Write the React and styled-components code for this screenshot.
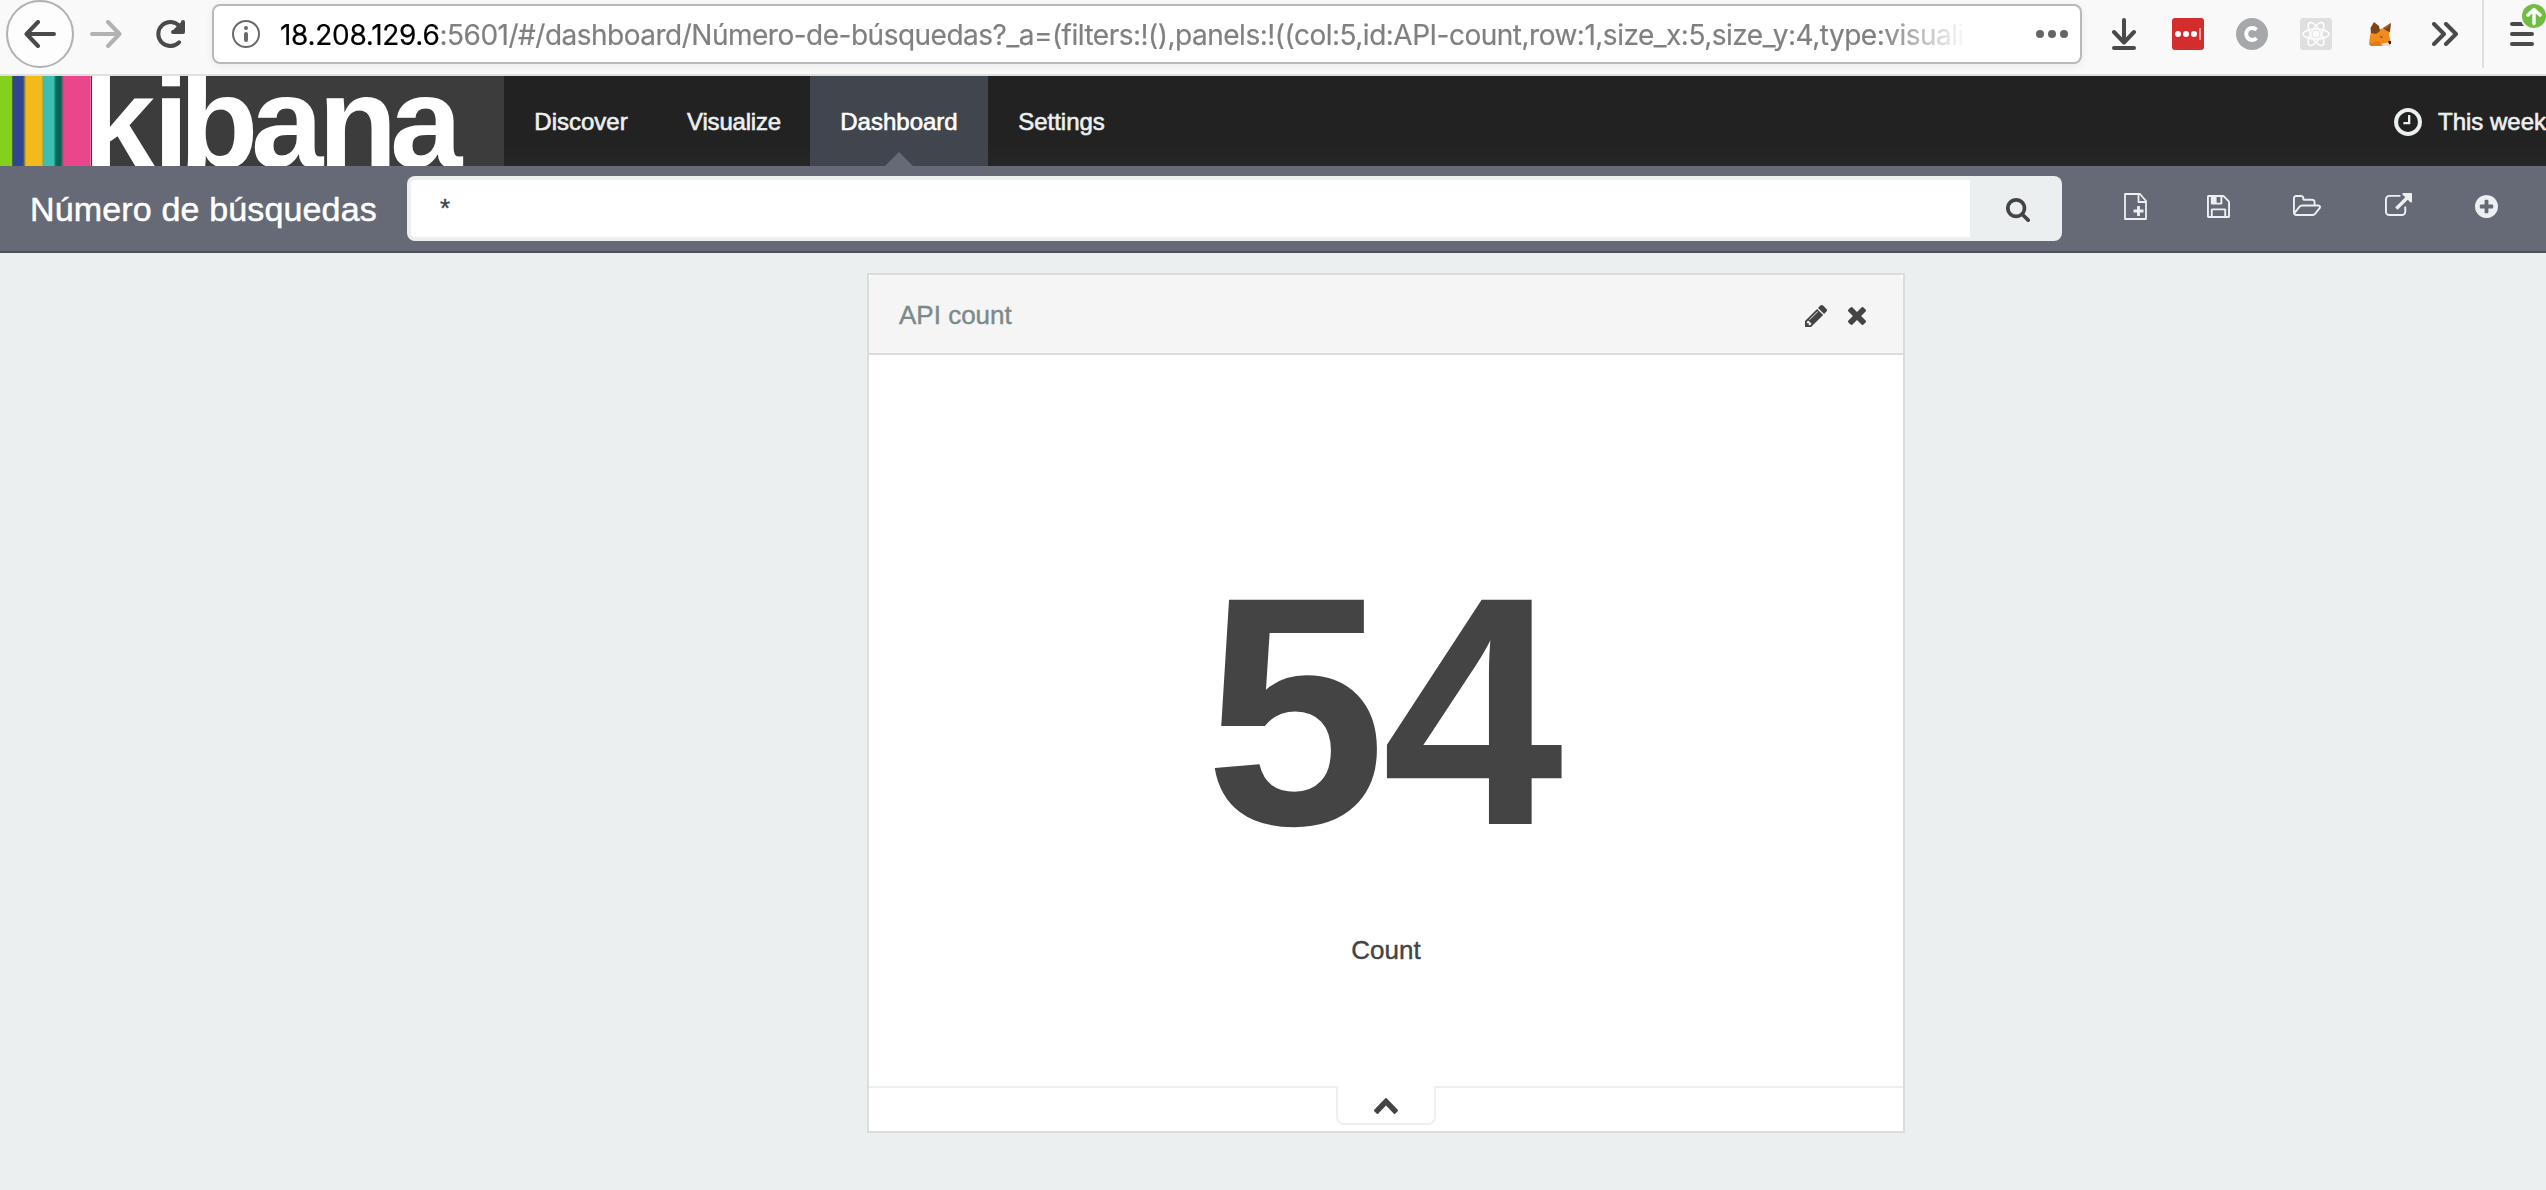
import React from 'react';
import styled, { createGlobalStyle } from 'styled-components';

const GlobalStyle = createGlobalStyle`
  * { box-sizing: border-box; }
  html, body { margin: 0; padding: 0; }
  body {
    background: #ebeff0;
    font-family: "Liberation Sans", Arial, Helvetica, sans-serif;
    color: #444;
    overflow: hidden;
  }
  svg { display: block; flex: none; }
`;

const Page = styled.div`
  width: 2546px;
  height: 1190px;
  overflow: hidden;
  background: #ebeff0;
`;

/* Browser chrome */
const BrowserBar = styled.header`
  display: flex;
  align-items: flex-start;
  height: 76px;
  background: #f9f9f9;
  border-bottom: 2px solid #dfe1e0;
`;

const BrowserButton = styled.div`
  display: flex;
  flex: none;
  align-items: center;
  justify-content: center;
  width: ${(p) => p.$width}px;
  height: 68px;
  margin-left: ${(p) => p.$gap || 0}px;
`;

const BackButton = styled(BrowserButton)`
  border: 2px solid #b1b1b1;
  border-radius: 50%;
  background: #fdfdfd;
`;

const AddressField = styled.div`
  display: flex;
  flex: none;
  align-items: center;
  width: 1870px;
  height: 60px;
  margin: 4px 0 0 25px;
  padding: 0 12px 0 18px;
  border: 2px solid #b9b9b9;
  border-radius: 8px;
  background: #fff;
  box-shadow: 0 2px 8px rgba(0, 0, 0, 0.06);
`;

const AddressText = styled.div`
  width: 1690px;
  margin-left: 20px;
  padding-top: 1px;
  overflow: hidden;
  white-space: nowrap;
  font: 400 28px/40px Inter, "Open Sans", sans-serif;
  letter-spacing: -0.5px;
  color: #808080;
  -webkit-text-stroke: 0.2px currentColor;
  mask-image: linear-gradient(to right, #000 1600px, transparent 1688px);
`;

const AddressHost = styled.span`
  color: #000;
  letter-spacing: -0.3px;
`;

const PageActions = styled.div`
  margin-left: auto;
`;

const MenuDivider = styled.div`
  flex: none;
  width: 2px;
  height: 68px;
  margin-left: 24px;
  background: #dfdfdf;
`;

/* Kibana navigation */
const NavBar = styled.nav`
  display: flex;
  height: 90px;
  background: linear-gradient(#222 75%, #262626);
`;

const Brand = styled.div`
  display: flex;
  width: 504px;
  height: 90px;
  overflow: hidden;
  background: #3c3c3c;
`;

const Stripes = styled.div`
  flex: none;
  width: 91px;
  background: linear-gradient(
    to right,
    #85cf1d 11.5px, #47684a 12px, #47684a 12.6px,
    #2f478f 13.5px, #2f478f 23px, #6c6a52 24px,
    #f2bb1a 26px, #f2bb1a 41.5px, #8ba55d 43px,
    #3cbeb1 44.5px, #3cbeb1 53.5px, #0a6a5c 56px,
    #00634f 60.5px, #6a5868 62px,
    #ea468b 64px, #ea468b 90px, #f3a5c5 91px
  );
`;

const Wordmark = styled.div`
  display: flex;
  flex: none;
  height: 150px;
  margin: -29px 0 0 -8px;
  font: 700 130px/150px "Liberation Sans", Arial, sans-serif;
  color: #fff;
`;

const Glyph = styled.span`
  flex: none;
  width: ${(p) => p.$advance}px;
  white-space: nowrap;
`;

const NavTab = styled.div`
  position: relative;
  display: flex;
  justify-content: center;
  width: ${(p) => p.$width}px;
  height: 90px;
  background: ${(p) => (p.$active ? '#41454d' : 'transparent')};
  color: ${(p) => (p.$active ? '#fff' : '#ecf0f1')};
  font-size: 24px;
  line-height: 92px;
  letter-spacing: ${(p) => p.$tracking || 0}px;
  -webkit-text-stroke: 0.6px currentColor;
`;

const TabArrow = styled.i`
  position: absolute;
  left: 50%;
  bottom: 0;
  margin-left: -14px;
  border: 14px solid transparent;
  border-top: 0;
  border-bottom-color: #656a76;
`;

const TimePicker = styled.div`
  display: flex;
  align-items: center;
  width: 152px;
  margin-left: auto;
  gap: 16px;
  white-space: nowrap;
  color: #ecf0f1;
  font-size: 24px;
  line-height: 92px;
  padding-top: 1px;
  -webkit-text-stroke: 0.6px currentColor;
`;

/* Dashboard toolbar */
const Toolbar = styled.div`
  display: flex;
  align-items: flex-start;
  height: 87px;
  padding: 10px 0 0 30px;
  background: #656a76;
  border-bottom: 2px solid #4c505b;
`;

const DashboardTitle = styled.h1`
  width: 377px;
  margin: 0;
  color: #fff;
  font-size: 34px;
  font-weight: 400;
  line-height: 67px;
  letter-spacing: 0.15px;
  white-space: nowrap;
  -webkit-text-stroke: 0.5px #fff;
`;

const SearchBox = styled.div`
  display: flex;
  width: 1655px;
  height: 65px;
  padding: 4px 0 4px 4px;
  border-radius: 8px;
  background: #ebeff0;
`;

const SearchInput = styled.div`
  width: 1559px;
  padding-left: 29px;
  border-radius: 4px 0 0 4px;
  background: #fff;
  color: #444;
  font-size: 26px;
  line-height: 57px;
  -webkit-text-stroke: 0.4px #444;
`;

const SearchButton = styled.div`
  display: flex;
  flex: 1;
  align-items: center;
  justify-content: center;
  padding: 2px 0 0 4px;
`;

const ToolIcon = styled.div`
  display: flex;
  justify-content: center;
  width: 40px;
  margin: ${(p) => p.$top}px 0 0 ${(p) => p.$gap}px;
  color: #ecf0f1;
`;

/* Dashboard panel */
const Canvas = styled.main`
  display: flex;
  padding: 20px 0 0 867px;
`;

const Panel = styled.section`
  display: flex;
  flex-direction: column;
  width: 1038px;
  height: 860px;
  border: 2px solid #dcdcdc;
  background: #fff;
`;

const PanelHeader = styled.div`
  display: flex;
  align-items: center;
  height: 80px;
  padding: 0 37px 0 30px;
  border-bottom: 2px solid #dcdcdc;
  border-radius: 6px 6px 0 0;
  background: #f5f5f5;
`;

const PanelTitle = styled.span`
  flex: 1;
  padding-top: 1px;
  color: #7b8a8b;
  font-size: 26px;
  line-height: 78px;
  -webkit-text-stroke: 0.4px #7b8a8b;
`;

const PanelActions = styled.div`
  display: flex;
  align-items: center;
  gap: 21px;
  padding-top: 3px;
`;

const MetricBody = styled.div`
  display: flex;
  flex-direction: column;
  align-items: center;
  height: 733px;
  border-bottom: 2px solid #ecf0f1;
`;

const MetricValue = styled.div`
  margin: 166px 8px 0 0;
  font-size: 326px;
  font-weight: 700;
  line-height: 380px;
  letter-spacing: -4px;
  color: #444;
`;

const MetricLabel = styled.div`
  margin-top: 29px;
  font-size: 26px;
  line-height: 40px;
  -webkit-text-stroke: 0.4px #444;
`;

const SpyTab = styled.div`
  display: flex;
  align-items: center;
  justify-content: center;
  align-self: center;
  width: 100px;
  height: 39px;
  margin-top: -2px;
  padding-top: 2px;
  border: 2px solid #ecf0f1;
  border-top: 0;
  border-radius: 0 0 8px 8px;
  background: #fff;
`;

const ICONS = {
  clock: 'M1024 544v448q0 14-9 23t-23 9h-320q-14 0-23-9t-9-23v-64q0-14 9-23t23-9h224v-352q0-14 9-23t23-9h64q14 0 23 9t9 23zm416 352q0-148-73-273t-198-198-273-73-273 73-198 198-73 273 73 273 198 198 273 73 273-73 198-198 73-273zm224 0q0 209-103 385.5t-279.5 279.5-385.5 103-385.5-103-279.5-279.5-103-385.5 103-385.5 279.5-279.5 385.5-103 385.5 103 279.5 279.5 103 385.5z',
  search: 'M1216 832q0-185-131.5-316.5t-316.5-131.5-316.5 131.5-131.5 316.5 131.5 316.5 316.5 131.5 316.5-131.5 131.5-316.5zm512 832q0 52-38 90t-90 38q-54 0-90-38l-343-342q-179 124-399 124-143 0-273.5-55.5t-225-150-150-225-55.5-273.5 55.5-273.5 150-225 225-150 273.5-55.5 273.5 55.5 225 150 150 225 55.5 273.5q0 220-124 399l343 343q37 37 37 90z',
  save: 'M512 1536h768v-384h-768v384zm896 0h128v-896q0-14-10-38.5t-20-34.5l-281-281q-10-10-34-20t-39-10v416q0 40-28 68t-68 28h-576q-40 0-68-28t-28-68v-416h-128v1280h128v-416q0-40 28-68t68-28h832q40 0 68 28t28 68v416zm-384-928v-320q0-13-9.5-22.5t-22.5-9.5h-192q-13 0-22.5 9.5t-9.5 22.5v320q0 13 9.5 22.5t22.5 9.5h192q13 0 22.5-9.5t9.5-22.5zm640 32v928q0 40-28 68t-68 28h-1344q-40 0-68-28t-28-68v-1344q0-40 28-68t68-28h928q40 0 88 20t76 48l280 280q28 28 48 76t20 88z',
  open: 'M1845 931q0-35-53-35h-1088q-40 0-85.5 21.5t-71.5 52.5l-294 363q-18 24-18 40 0 35 53 35h1088q40 0 86-22t71-53l294-363q18-22 18-39zm-1141-163h768v-160q0-40-28-68t-68-28h-576q-40 0-68-28t-28-68v-64q0-40-28-68t-68-28h-320q-40 0-68 28t-28 68v853l256-315q44-53 116-87.5t140-34.5zm1269 163q0 62-46 120l-295 363q-43 53-116 87.5t-140 34.5h-1088q-92 0-158-66t-66-158v-960q0-92 66-158t158-66h320q92 0 158 66t66 158v32h544q92 0 158 66t66 158v160h192q54 0 99 24.5t67 70.5q15 32 15 68z',
  share: 'M1408 928v320q0 119-84.5 203.5t-203.5 84.5h-832q-119 0-203.5-84.5t-84.5-203.5v-832q0-119 84.5-203.5t203.5-84.5h704q14 0 23 9t9 23v64q0 14-9 23t-23 9h-704q-66 0-113 47t-47 113v832q0 66 47 113t113 47h832q66 0 113-47t47-113v-320q0-14 9-23t23-9h64q14 0 23 9t9 23zm384-864v512q0 26-19 45t-45 19-45-19l-176-176-652 652q-10 10-23 10t-23-10l-114-114q-10-10-10-23t10-23l652-652-176-176q-19-19-19-45t19-45 45-19h512q26 0 45 19t19 45z',
  add: 'M1344 960v-128q0-26-19-45t-45-19h-256v-256q0-26-19-45t-45-19h-128q-26 0-45 19t-19 45v256h-256q-26 0-45 19t-19 45v128q0 26 19 45t45 19h256v256q0 26 19 45t45 19h128q26 0 45-19t19-45v-256h256q26 0 45-19t19-45zm320-64q0 209-103 385.5t-279.5 279.5-385.5 103-385.5-103-279.5-279.5-103-385.5 103-385.5 279.5-279.5 385.5-103 385.5 103 279.5 279.5 103 385.5z',
  pencil: 'M491 1536l91-91-235-235-91 91v107h128v128h107zm523-928q0-22-22-22-10 0-17 7l-542 542q-7 7-7 17 0 22 22 22 10 0 17-7l542-542q7-7 7-17zm-54-192l416 416-832 832h-416v-416zm683 96q0 53-37 90l-166 166-416-416 166-165q36-38 90-38 53 0 91 38l235 234q37 39 37 91z',
  close: 'M1490 1322q0 40-28 68l-136 136q-28 28-68 28t-68-28l-294-294-294 294q-28 28-68 28t-68-28l-136-136q-28-28-28-68t28-68l294-294-294-294q-28-28-28-68t28-68l136-136q28-28 68-28t68 28l294 294 294-294q28-28 68-28t68 28l136 136q28 28 28 68t-28 68l-294 294 294 294q28 28 28 68z',
  up: 'M1683 1331l-166 165q-19 19-45 19t-45-19l-531-531-531 531q-19 19-45 19t-45-19l-166-165q-19-19-19-45.5t19-45.5l742-741q19-19 45-19t45 19l742 741q19 19 19 45.5t-19 45.5z',
};

/* box is the drawn area of the glyph in font units: x, y, width, height */
function Icon({ name, width, height, box, color = 'currentColor' }) {
  return (
    <svg width={width} height={height} viewBox={box} preserveAspectRatio="none" fill={color}>
      <path d={ICONS[name]} />
    </svg>
  );
}

function StrokeIcon({ width, height, color = '#4a4a4a', weight = 4, children }) {
  return (
    <svg
      width={width}
      height={height}
      viewBox={`0 0 ${width} ${height}`}
      fill="none"
      stroke={color}
      strokeWidth={weight}
      strokeLinecap="round"
      strokeLinejoin="round"
    >
      {children}
    </svg>
  );
}

function Chrome() {
  return (
    <BrowserBar>
      <BackButton $width={68} $gap={6}>
        <StrokeIcon width={32} height={28}>
          <path d="M30 14H2.5M14 2L2.5 14L14 26" />
        </StrokeIcon>
      </BackButton>
      <BrowserButton $width={32} $gap={16}>
        <StrokeIcon width={32} height={28} color="#b2b2b2">
          <path d="M2 14H29.5M18 2L29.5 14L18 26" />
        </StrokeIcon>
      </BrowserButton>
      <BrowserButton $width={32} $gap={33}>
        <StrokeIcon width={32} height={28}>
          <path d="M24 22.3A12 12 0 1 1 24.5 6.3" />
          <path d="M28.5 2V12.3H18.5Z" fill="#4a4a4a" stroke="none" />
          <path d="M28 2V12H18" />
          <path d="M27 4L20 11" />
        </StrokeIcon>
      </BrowserButton>
      <AddressField>
        <StrokeIcon width={28} height={28} color="#6a6a6a" weight={2}>
          <circle cx="14" cy="14" r="13" />
          <circle cx="14" cy="8" r="2" fill="#6a6a6a" stroke="none" />
          <path d="M14 14V20" strokeWidth="4" />
        </StrokeIcon>
        <AddressText>
          <AddressHost>18.208.129.6</AddressHost>
          :5601/#/dashboard/Número-de-búsquedas?_a=(filters:!(),panels:!((col:5,id:API-count,row:1,size_x:5,size_y:4,type:visuali
        </AddressText>
        <PageActions>
          <svg width="32" height="8" fill="#666">
            <circle cx="4" cy="4" r="4" />
            <circle cx="16" cy="4" r="4" />
            <circle cx="28" cy="4" r="4" />
          </svg>
        </PageActions>
      </AddressField>
      <BrowserButton $width={24} $gap={30}>
        <StrokeIcon width={24} height={32}>
          <path d="M12 2V24M2 14L12 24.5L22 14M2 30H22" />
        </StrokeIcon>
      </BrowserButton>
      <BrowserButton $width={32} $gap={36}>
        <svg width="32" height="32">
          <rect width="32" height="32" rx="3" fill="#d32d2d" />
          <g fill="#fff">
            <circle cx="6" cy="16" r="3" />
            <circle cx="14" cy="16" r="3" />
            <circle cx="22" cy="16" r="3" />
          </g>
          <rect x="27" y="10" width="2" height="12" fill="#eba0a0" />
        </svg>
      </BrowserButton>
      <BrowserButton $width={32} $gap={32}>
        <svg width="32" height="32" fill="none">
          <circle cx="16" cy="16" r="16" fill="#a7a8ac" />
          <path d="M20.5 11.8A6 6 0 1 0 20.5 20.2" stroke="#fff" strokeWidth="4" />
        </svg>
      </BrowserButton>
      <BrowserButton $width={32} $gap={32}>
        <svg width="32" height="32" fill="none" stroke="#fff" strokeWidth="1.5">
          <rect width="32" height="32" rx="3" fill="#dfdfdf" stroke="none" />
          <ellipse cx="16" cy="16" rx="13" ry="5" />
          <ellipse cx="16" cy="16" rx="13" ry="5" transform="rotate(60 16 16)" />
          <ellipse cx="16" cy="16" rx="13" ry="5" transform="rotate(120 16 16)" />
          <circle cx="16" cy="16" r="2.6" fill="#fff" />
        </svg>
      </BrowserButton>
      <BrowserButton $width={22} $gap={37}>
        <svg width="22" height="24">
          <path d="M2 9L8 8L15 6L21 8L20 13L22 21L20 24H2L0 22L1 14Z" fill="#f28a1e" />
          <path d="M5 0L10 4L11 9L7 12L2 11L1.5 6Z" fill="#7a4519" />
          <path d="M22 1L21 10L18 9L14 6Z" fill="#7a4519" />
          <path d="M22 1L14 6L18 6Z" fill="#b5651d" />
          <path d="M0 22L9 19L13 23L10 24H2Z" fill="#e27a17" />
          <path d="M12 22L21 20L20 24H14Z" fill="#e8dcd0" />
          <path d="M19 19H22V22H20Z" fill="#2d2018" />
          <path d="M11 14L14 15L12 16Z" fill="#6b3a12" />
        </svg>
      </BrowserButton>
      <BrowserButton $width={26} $gap={41}>
        <StrokeIcon width={26} height={24}>
          <path d="M2 2L12 12L2 22M14 2L24 12L14 22" />
        </StrokeIcon>
      </BrowserButton>
      <MenuDivider />
      <BrowserButton $width={36} $gap={26}>
        <svg width="36" height="68" fill="none" strokeLinecap="round">
          <path d="M2 24H22M2 34H22M2 44H22" stroke="#4a4a4a" strokeWidth="4" />
          <circle cx="24" cy="16" r="14" fill="#f9f9f9" />
          <circle cx="24" cy="16" r="12" fill="#6fbe44" />
          <path d="M24 23.5V10M18 15L24 9.5L30 15" stroke="#fff" strokeWidth="3.4" strokeLinejoin="round" />
        </svg>
      </BrowserButton>
    </BrowserBar>
  );
}

const WORDMARK = [
  ['k', 70],
  ['i', 26],
  ['b', 72],
  ['a', 67],
  ['n', 72],
  ['a', 72],
];

function Navigation() {
  return (
    <NavBar>
      <Brand>
        <Stripes />
        <Wordmark>
          {WORDMARK.map(([letter, advance], i) => (
            <Glyph key={i} $advance={advance}>{letter}</Glyph>
          ))}
        </Wordmark>
      </Brand>
      <NavTab $width={154}>Discover</NavTab>
      <NavTab $width={152} $tracking={-0.2}>Visualize</NavTab>
      <NavTab $width={178} $active>
        Dashboard
        <TabArrow />
      </NavTab>
      <NavTab $width={147}>Settings</NavTab>
      <TimePicker>
        <Icon name="clock" width={28} height={28} box="128 128 1536 1536" />
        This week
      </TimePicker>
    </NavBar>
  );
}

function DashboardToolbar() {
  return (
    <Toolbar>
      <DashboardTitle>Número de búsquedas</DashboardTitle>
      <SearchBox>
        <SearchInput>*</SearchInput>
        <SearchButton>
          <Icon name="search" width={24} height={24} box="64 128 1664 1664" color="#444" />
        </SearchButton>
      </SearchBox>
      <ToolIcon $gap={53} $top={17}>
        <StrokeIcon width={23} height={27} color="#ecf0f1" weight={1.8}>
          <path d="M1 1H16L22 8V26H1Z" />
          <path d="M14.5 1V9H22" />
          <path d="M14.5 13V23M9.5 18H19.5" strokeWidth="2.8" strokeLinecap="butt" />
        </StrokeIcon>
      </ToolIcon>
      <ToolIcon $gap={43} $top={19}>
        <Icon name="save" width={23} height={23} box="128 128 1536 1536" />
      </ToolIcon>
      <ToolIcon $gap={49} $top={19}>
        <Icon name="open" width={28} height={21} box="64 128 1909 1408" />
      </ToolIcon>
      <ToolIcon $gap={51} $top={17}>
        <Icon name="share" width={27} height={23} box="0 0 1792 1536" />
      </ToolIcon>
      <ToolIcon $gap={48} $top={19}>
        <Icon name="add" width={23} height={23} box="128 128 1536 1536" />
      </ToolIcon>
    </Toolbar>
  );
}

function MetricPanel() {
  return (
    <Panel>
      <PanelHeader>
        <PanelTitle>API count</PanelTitle>
        <PanelActions>
          <Icon name="pencil" width={22} height={22} box="128 149 1515 1515" color="#444" />
          <Icon name="close" width={18} height={18} box="302 366 1188 1188" color="#444" />
        </PanelActions>
      </PanelHeader>
      <MetricBody>
        <MetricValue>54</MetricValue>
        <MetricLabel>Count</MetricLabel>
      </MetricBody>
      <SpyTab>
        <Icon name="up" width={24} height={16} box="90 480 1612 1036" color="#444" />
      </SpyTab>
    </Panel>
  );
}

export default function App() {
  return (
    <Page>
      <GlobalStyle />
      <Chrome />
      <Navigation />
      <DashboardToolbar />
      <Canvas>
        <MetricPanel />
      </Canvas>
    </Page>
  );
}
